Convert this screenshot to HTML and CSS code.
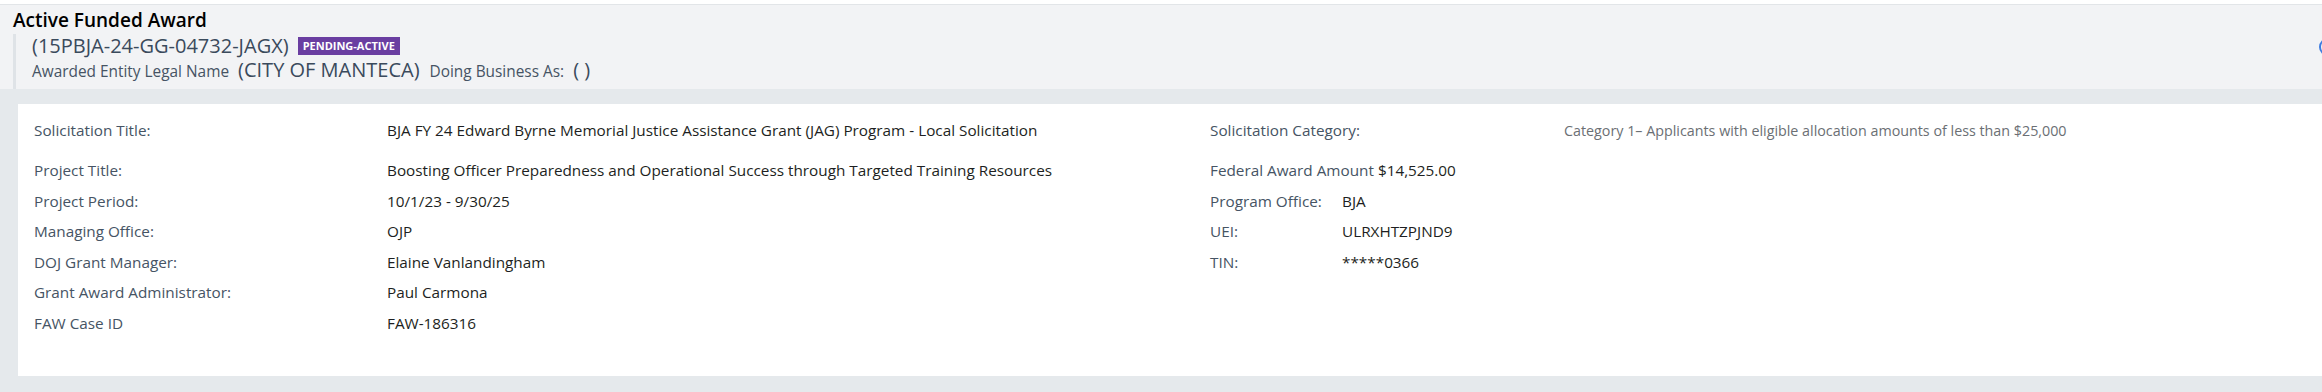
FILE: index.html
```html
<!DOCTYPE html>
<html lang="en">
<head>
    <meta charset="UTF-8">
    <meta name="viewport" content="width=device-width, initial-scale=1.0">
    <title>Active Funded Award</title>
    <link rel="stylesheet" href="styles.css">
</head>
<body>

    <div class="award-header">
        <h1 class="award-title">Active Funded Award</h1>
        <div class="award-sub">
            <div class="award-id-row">
                <span class="award-id">(15PBJA-24-GG-04732-JAGX)</span>
                <span class="status-badge">PENDING-ACTIVE</span>
            </div>
            <div class="entity-row">
                <span class="entity-label">Awarded Entity Legal Name</span>
                <span class="entity-name">(CITY OF MANTECA)</span>
                <span class="entity-label dba">Doing Business As:</span>
                <span class="entity-name">( )</span>
            </div>
        </div>
        <span class="header-action"></span>
    </div>

    <div class="award-body">
        <div class="award-card">

            <div class="detail-row first">
                <span class="label">Solicitation Title:</span>
                <span class="value">BJA FY 24 Edward Byrne Memorial Justice Assistance Grant (JAG) Program - Local Solicitation</span>
                <span class="side">
                    <span class="side-label wide">Solicitation Category:</span>
                    <span class="side-note">Category 1– Applicants with eligible allocation amounts of less than $25,000</span>
                </span>
            </div>

            <div class="detail-row">
                <span class="label">Project Title:</span>
                <span class="value">Boosting Officer Preparedness and Operational Success through Targeted Training Resources</span>
                <span class="side">
                    <span class="side-label">Federal Award Amount</span>
                    <span class="value">$14,525.00</span>
                </span>
            </div>

            <div class="detail-row">
                <span class="label">Project Period:</span>
                <span class="value">10/1/23 - 9/30/25</span>
                <span class="side">
                    <span class="side-label">Program Office:</span>
                    <span class="value">BJA</span>
                </span>
            </div>

            <div class="detail-row">
                <span class="label">Managing Office:</span>
                <span class="value">OJP</span>
                <span class="side">
                    <span class="side-label">UEI:</span>
                    <span class="value">ULRXHTZPJND9</span>
                </span>
            </div>

            <div class="detail-row">
                <span class="label">DOJ Grant Manager:</span>
                <span class="value">Elaine Vanlandingham</span>
                <span class="side">
                    <span class="side-label">TIN:</span>
                    <span class="value">*****0366</span>
                </span>
            </div>

            <div class="detail-row">
                <span class="label">Grant Award Administrator:</span>
                <span class="value">Paul Carmona</span>
                <span class="side"></span>
            </div>

            <div class="detail-row">
                <span class="label">FAW Case ID</span>
                <span class="value">FAW-186316</span>
                <span class="side"></span>
            </div>

        </div>
    </div>

</body>
</html>
```

FILE: styles.css
```css
html, body {
  margin: 0;
  padding: 0;
}

body {
  background-color: #fff;
  font-family: "Open Sans", "Liberation Sans", sans-serif;
  color: #212529;
  overflow: hidden;
  padding-top: 4px;
}

/* header */
.award-header {
  position: relative;
  background-color: #f2f3f5;
  border-top: 1px solid #e2e5e8;
  padding: 3px 0 0 13px;
  height: 81px;
}

.award-title {
  margin: 0;
  font-size: 19px;
  font-weight: 600;
  line-height: 24px;
  color: #000;
}

.award-sub {
  margin-top: 2px;
  border-left: 3px solid #dfe3e7;
  padding-left: 16px;
  height: 55px;
}

.award-id-row {
  display: flex;
  align-items: center;
  gap: 9px;
  height: 24px;
}

.award-id {
  font-size: 20px;
  font-weight: 500;
  color: #3a4a5c;
  line-height: 24px;
}

.status-badge {
  background-color: #6a3ea1;
  color: #fff;
  font-size: 11px;
  font-weight: 700;
  line-height: 18px;
  padding: 0 5px;
}

.entity-row {
  display: flex;
  align-items: baseline;
  height: 24px;
  line-height: 24px;
}

.entity-label {
  font-size: 15.4px;
  color: #465464;
  margin-right: 9px;
}

.entity-label.dba {
  margin-left: 10px;
}

.entity-name {
  font-size: 20px;
  font-weight: 500;
  color: #3a4a5c;
}

.header-action {
  position: absolute;
  left: 2319px;
  top: 33px;
  width: 14px;
  height: 14px;
  border: 2px solid #3d7be0;
  border-radius: 50%;
}

/* body */
.award-body {
  background-color: #e5e9ec;
  padding: 15px 0 16px 18px;
}

.award-card {
  background-color: #fff;
  padding: 15px 16px 33px 16px;
}

.detail-row {
  display: grid;
  grid-template-columns: 353px 823px 1fr;
  align-items: start;
  min-height: 30.6px;
  font-size: 15.3px;
  line-height: 22px;
}

.detail-row.first {
  min-height: 40px;
}

.label {
  color: #465464;
}

.value {
  color: #1d1f22;
}

.side {
  display: flex;
  align-items: baseline;
}

.side-label {
  color: #465464;
  min-width: 128px;
  margin-right: 4px;
}

.side-label.wide {
  min-width: 354px;
  margin-right: 0;
}

.side-note {
  font-size: 14.3px;
  color: #6b6f74;
}
```
